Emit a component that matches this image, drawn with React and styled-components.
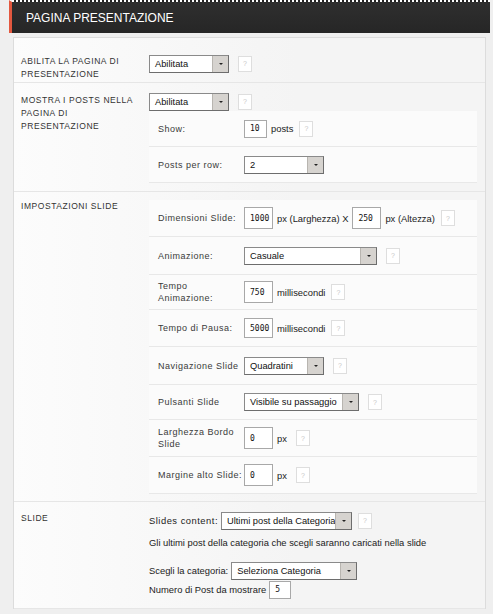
import React from "react";
import styled, { createGlobalStyle } from "styled-components";

const Global = createGlobalStyle`
  html, body {
    margin: 0;
    background: #efefef;
  }
  body {
    font-family: "Liberation Sans", Arial, sans-serif;
    color: #222;
  }
`;

const Wrap = styled.div`
  padding: 0 3px 0 9px;
`;

const Header = styled.div`
  height: 33px;
  box-sizing: border-box;
  background: linear-gradient(#2f2f2f, #262626);
  border-left: 3px solid #e3583f;
  border-top: 2px dotted #fff;
  display: flex;
  align-items: center;
  padding-left: 14px;
  color: #fff;
  font-size: 12px;
  text-transform: uppercase;
`;

const Panel = styled.div`
  margin: 4px 4px 0 4px;
  border: 1px solid #dcdcdc;
  border-bottom: none;
  background: linear-gradient(90deg, #fcfcfc, #f4f4f4 60%);
  padding-top: 7px;
`;

const Section = styled.div`
  display: grid;
  grid-template-columns: 128px 1fr;
  align-items: start;
  padding: ${(p) => p.$pt || 10}px 8px ${(p) => p.$pb || 1}px 7px;
  border-bottom: 1px solid #e6e6e6;
`;

const Title = styled.div`
  font-size: 8.5px;
  line-height: 13px;
  letter-spacing: 0.55px;
  text-transform: uppercase;
  color: #333;
  padding-top: ${(p) => p.$pt || 0}px;
`;

const Body = styled.div`
  display: flex;
  flex-direction: column;
`;

const Line = styled.div`
  display: flex;
  align-items: center;
  gap: ${(p) => p.$gap || 4}px;
  margin-top: ${(p) => p.$mt || 0}px;
  line-height: 12px;
  font-size: 9.4px;
  color: #222;
`;

const Caption = styled.span`
  letter-spacing: ${(p) => p.$ls || 0}px;
`;

const Sub = styled.div`
  background: #fbfbfb;
  margin-top: ${(p) => p.$mt || 0}px;
`;

const SubRow = styled.div`
  display: grid;
  grid-template-columns: 86px 1fr;
  align-items: center;
  height: ${(p) => p.$h || 36}px;
  padding: 0 0 0 9px;
  border-bottom: 1px solid #e8e8e8;
  box-sizing: border-box;
`;

const SubLabel = styled.div`
  font-size: 9px;
  line-height: 12px;
  letter-spacing: 0.5px;
  color: #3a3a3a;
`;

const Controls = styled.div`
  display: flex;
  align-items: center;
  gap: 4px;
  font-size: 9.4px;
  color: #222;
`;

const SelectBox = styled.div`
  width: ${(p) => p.$w}px;
  height: 18px;
  box-sizing: border-box;
  border: 1px solid #8a8a8a;
  border-right-color: #6d6d6d;
  border-bottom-color: #6d6d6d;
  background: #fff;
  display: flex;
  align-items: center;
  font-size: 9.3px;
  color: #111;
  overflow: hidden;
`;

const SelectText = styled.span`
  flex: 1;
  padding-left: 5px;
  white-space: nowrap;
  overflow: hidden;
`;

const Arrow = styled.span`
  width: 15px;
  height: 100%;
  flex-shrink: 0;
  background: #d6d3cf;
  border-left: 1px solid #b8b5b0;
  display: flex;
  align-items: center;
  justify-content: center;
  &::after {
    content: "";
    border-left: 2px solid transparent;
    border-right: 2px solid transparent;
    border-top: 2px solid #222;
  }
`;

const Input = styled.div`
  width: ${(p) => p.$w || 29}px;
  height: ${(p) => p.$h || 20}px;
  box-sizing: border-box;
  border: 1px solid #a8a8a8;
  background: #fff;
  display: flex;
  align-items: center;
  padding-left: 5px;
  font-family: "DejaVu Sans Mono", monospace;
  font-size: 8px;
  color: #111;
`;

const Help = styled.span`
  width: 14px;
  height: 16px;
  box-sizing: border-box;
  border: 1px solid #dedede;
  background: #fff;
  color: #c8c8c8;
  font-size: 7px;
  display: inline-flex;
  align-items: center;
  justify-content: center;
  margin-left: ${(p) => p.$ml || 2}px;
`;

const Select = ({ w, children }) => (
  <SelectBox $w={w}>
    <SelectText>{children}</SelectText>
    <Arrow />
  </SelectBox>
);

const Opt = ({ label, children, h }) => (
  <SubRow $h={h}>
    <SubLabel>{label}</SubLabel>
    <Controls>{children}</Controls>
  </SubRow>
);

export default function App() {
  return (
    <Wrap>
      <Global />
      <Header>Pagina presentazione</Header>
      <Panel>
        <Section $pb={1}>
          <Title>
            Abilita la pagina di
            <br />
            presentazione
          </Title>
          <Body>
            <Line>
              <Select w={80}>Abilitata</Select>
              <Help $ml={5}>?</Help>
            </Line>
          </Body>
        </Section>

        <Section $pb={8}>
          <Title $pt={1}>
            Mostra i posts nella
            <br />
            pagina di
            <br />
            presentazione
          </Title>
          <Body>
            <Line>
              <Select w={80}>Abilitata</Select>
              <Help $ml={5}>?</Help>
            </Line>
            <Sub>
              <Opt label="Show:">
                <Input $w={23} $h={18}>10</Input>
                <span>posts</span>
                <Help>?</Help>
              </Opt>
              <Opt label="Posts per row:">
                <Select w={80}>2</Select>
              </Opt>
            </Sub>
          </Body>
        </Section>

        <Section $pt={8} $pb={7}>
          <Title $pt={0}>Impostazioni slide</Title>
          <Body>
            <Sub>
              <Opt label="Dimensioni Slide:" h={37}>
                <Input $h={22}>1000</Input>
                <span>px (Larghezza) X</span>
                <Input $h={22}>250</Input>
                <span>px (Altezza)</span>
                <Help>?</Help>
              </Opt>
              <Opt label="Animazione:" h={38}>
                <Select w={133}>Casuale</Select>
                <Help $ml={5}>?</Help>
              </Opt>
              <Opt label={<>Tempo<br />Animazione:</>} h={35}>
                <Input $h={22}>750</Input>
                <span>millisecondi</span>
                <Help>?</Help>
              </Opt>
              <Opt label="Tempo di Pausa:" h={37}>
                <Input $h={20}>5000</Input>
                <span>millisecondi</span>
                <Help>?</Help>
              </Opt>
              <Opt label="Navigazione Slide" h={38}>
                <Select w={80}>Quadratini</Select>
                <Help $ml={5}>?</Help>
              </Opt>
              <Opt label="Pulsanti Slide" h={35}>
                <Select w={115}>Visibile su passaggio</Select>
                <Help $ml={5}>?</Help>
              </Opt>
              <Opt label={<>Larghezza Bordo<br />Slide</>} h={37}>
                <Input $h={22}>0</Input>
                <span>px</span>
                <Help $ml={5}>?</Help>
              </Opt>
              <Opt label="Margine alto Slide:" h={37}>
                <Input $h={22}>0</Input>
                <span>px</span>
                <Help $ml={5}>?</Help>
              </Opt>
            </Sub>
          </Body>
        </Section>

        <Section $pb={9}>
          <Title $pt={0}>Slide</Title>
          <Body>
            <Line $gap={3}>
              <Caption $ls={0.5}>Slides content:</Caption>
              <Select w={131}>Ultimi post della Categoria</Select>
              <Help $ml={3}>?</Help>
            </Line>
            <Line $mt={7}>
              Gli ultimi post della categoria che scegli saranno caricati nella slide
            </Line>
            <Line $gap={3} $mt={13}>
              <Caption>Scegli la categoria:</Caption>
              <Select w={126}>Seleziona Categoria</Select>
            </Line>
            <Line $gap={3} $mt={1}>
              <Caption>Numero di Post da mostrare</Caption>
              <Input $w={22} $h={18}>5</Input>
            </Line>
          </Body>
        </Section>
      </Panel>
    </Wrap>
  );
}
